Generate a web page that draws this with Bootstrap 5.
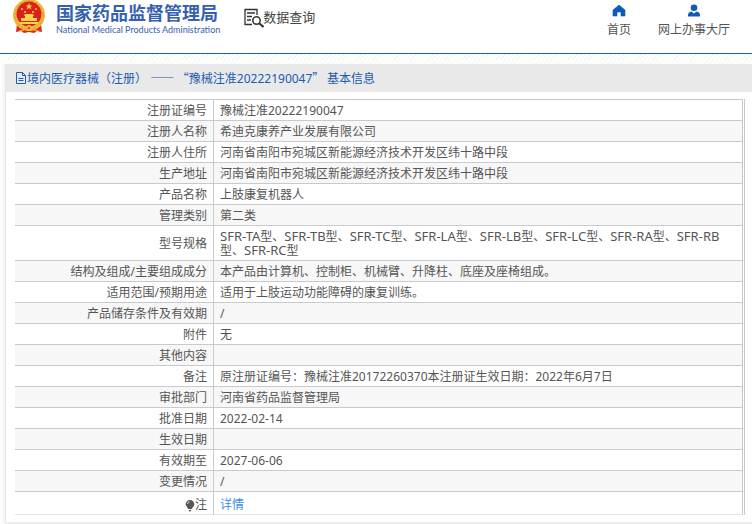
<!DOCTYPE html>
<html lang="zh-CN">
<head>
<meta charset="utf-8">
<meta name="viewport" content="width=device-width, initial-scale=1">
<title>国家药品监督管理局 数据查询</title>
<link href="https://cdn.jsdelivr.net/npm/bootstrap@5.3.0/dist/css/bootstrap.min.css" rel="stylesheet">
<style>
body{font-family:"Noto Sans","Noto Sans CJK SC",sans-serif;font-size:12px;line-height:14px;color:#555;background:#fff}
a{text-decoration:none}
.site-header{height:54px;border-bottom:1px solid #1b6289;padding:0 22px 0 12px}
.hatch{height:10px;background:repeating-linear-gradient(135deg,#f2f6f6 0 1px,#fff 1px 3px);border-bottom:4px solid #fdfdfd}
.brand{color:#3560b0;gap:10px}
.brand-cn{font:700 18px/24px "Noto Sans CJK SC",sans-serif}
.brand-en{font:400 9px/12px Lato,sans-serif}
.query-link{color:#444;font-size:13px;line-height:18px;margin-left:24px;padding-top:8px}
.query-link svg{margin-right:-1px}
.nav-item-link{color:#555;line-height:16px;gap:5px;padding-top:4px}
.nav-item-link svg{color:#0d5bb8}
.top-nav{gap:27px}
.panel{margin-left:5px;border-left:1px solid #e6e6e6;border-bottom:2px solid #ededed;box-shadow:-3px 0 3px #f6f6f6}
.panel-title{font-size:12px;line-height:20px;height:28px;background:#e9e9e9;color:#1a5cb0;padding-left:9px;margin:0 0 7px;font-weight:400}
.cjk{font-family:"Noto Sans CJK SC",sans-serif}
.table-wrap{margin:0 7px 0 9px;border-right:1px solid #c8cacd;padding-right:1px;margin-bottom:7px}
.info{width:100%;border-right:1px solid #c8cacd;border-collapse:separate;border-spacing:0}
.info th,.info td{border-top:1px solid #c8cacd;padding:4px 6px 2px;font-weight:400;vertical-align:middle}
.info th{width:199px;text-align:right;border-right:1px solid #c8cacd}
.info tr:nth-child(even){background:#f7f7f7}
.info tr:last-child>*{padding-top:6px;padding-bottom:2px;border-bottom:1px solid #e4e4e4}
.info tr>td:empty{height:21px}
.info a{color:#3a8ee6}
.models span{font-size:13px;line-height:12px}
</style>
</head>
<body>
<header class="site-header d-flex justify-content-between align-items-start">
  <div class="d-flex align-items-start">
    <a href="#" class="brand d-flex align-items-start">
      <svg width="34" height="34" viewBox="0 0 34 34" aria-hidden="true">
        <path d="M5 24L4 32l5-1 3 2 5-1 5 1 3-2 5 1-1-8z" fill="#d92a20"/>
        <circle cx="17" cy="15" r="16" fill="#efb83e"/>
        <circle cx="17" cy="15" r="14" fill="none" stroke="#d99424" stroke-width="1" stroke-dasharray="2 2"/>
        <circle cx="17" cy="14" r="12.500" fill="#dc2118"/>
        <path d="M17 3l1 2.500h2.500l-2 1.500.8 2.500L17 8l-2.300 1.500.8-2.500-2-1.500H16z" fill="#fbd34c"/>
        <g fill="#fbd34c"><circle cx="10" cy="9" r="1"/><circle cx="24" cy="9" r="1"/><circle cx="13" cy="12" r="1"/><circle cx="21" cy="12" r="1"/><path d="M13 14h8l1 2h-1v2h4v3H9v-3h4v-2h-1zM7 22h20l-2 2H9z"/></g>
        <circle cx="17" cy="28" r="3" fill="#efb83e"/><circle cx="17" cy="28" r="1" fill="#d92a20"/>
        <path d="M8 26q4 0 5 3M26 26q-4 0-5 3M7 31l5-1M27 31l-5-1" fill="none" stroke="#efb83e"/>
      </svg>
      <span class="d-flex flex-column">
        <span class="brand-cn">国家药品监督管理局</span>
        <span class="brand-en">National Medical Products Administration</span>
      </span>
    </a>
    <a href="#" class="query-link d-flex">
      <svg width="20" height="20" viewBox="0 0 20 20" fill="none" stroke="#333" aria-hidden="true">
        <path d="M13 7V1.500H1V16.500H8M3 5h8M3 8.500h5M3 12h4" stroke-width="1.300"/>
        <circle cx="12.500" cy="12.500" r="3.700" stroke-width="1.500"/><path d="M15.500 15.500l4 3.500" stroke-width="2.200"/>
      </svg><span>数据查询</span>
    </a>
  </div>
  <nav class="top-nav d-flex">
    <a href="#" class="nav-item-link d-flex flex-column align-items-center">
      <svg width="14" height="13" viewBox="0 0 14 13" fill="currentColor" aria-hidden="true"><path d="M7 1l6 5v6H9V8H5v4H1V6z" stroke="currentColor" stroke-linejoin="round" stroke-width=".6"/></svg>
      <span>首页</span>
    </a>
    <a href="#" class="nav-item-link d-flex flex-column align-items-center">
      <svg width="14" height="13" viewBox="0 0 14 13" fill="currentColor" aria-hidden="true"><circle cx="7" cy="3.700" r="3.300"/><path d="M1 12.500V11q0-3 3.500-3.500L7 9.500l2.500-2Q13 8 13 11v1.500z"/></svg>
      <span>网上办事大厅</span>
    </a>
  </nav>
</header>
<div class="hatch"></div>
<main class="panel">
  <h1 class="panel-title d-flex align-items-center">
    <svg width="12" height="12" viewBox="0 0 12 12" fill="none" stroke="currentColor" aria-hidden="true"><path d="M1.500.5h6l3 3v8h-9zM7.500.5v3h3M3.500 6.500h5M3.500 8.500h5"/></svg>
    <span>境内医疗器械（注册） <span class="cjk">—— “</span>豫械注准20222190047<span class="cjk">” </span>基本信息</span>
  </h1>
  <div class="table-wrap">
    <table class="info">
      <tbody>
        <tr><th scope="row">注册证编号</th><td>豫械注准20222190047</td></tr>
        <tr><th scope="row">注册人名称</th><td>希迪克康养产业发展有限公司</td></tr>
        <tr><th scope="row">注册人住所</th><td>河南省南阳市宛城区新能源经济技术开发区纬十路中段</td></tr>
        <tr><th scope="row">生产地址</th><td>河南省南阳市宛城区新能源经济技术开发区纬十路中段</td></tr>
        <tr><th scope="row">产品名称</th><td>上肢康复机器人</td></tr>
        <tr><th scope="row">管理类别</th><td>第二类</td></tr>
        <tr><th scope="row">型号规格</th><td class="models"><span>SFR-TA</span>型、<span>SFR-TB</span>型、<span>SFR-TC</span>型、<span>SFR-LA</span>型、<span>SFR-LB</span>型、<span>SFR-LC</span>型、<span>SFR-RA</span>型、<span>SFR-RB</span>型、<span>SFR-RC</span>型</td></tr>
        <tr><th scope="row">结构及组成/主要组成成分</th><td>本产品由计算机、控制柜、机械臂、升降柱、底座及座椅组成。</td></tr>
        <tr><th scope="row">适用范围/预期用途</th><td>适用于上肢运动功能障碍的康复训练。</td></tr>
        <tr><th scope="row">产品储存条件及有效期</th><td>/</td></tr>
        <tr><th scope="row">附件</th><td>无</td></tr>
        <tr><th scope="row">其他内容</th><td></td></tr>
        <tr><th scope="row">备注</th><td>原注册证编号：豫械注准20172260370本注册证生效日期：2022年6月7日</td></tr>
        <tr><th scope="row">审批部门</th><td>河南省药品监督管理局</td></tr>
        <tr><th scope="row">批准日期</th><td>2022-02-14</td></tr>
        <tr><th scope="row">生效日期</th><td></td></tr>
        <tr><th scope="row">有效期至</th><td>2027-06-06</td></tr>
        <tr><th scope="row">变更情况</th><td>/</td></tr>
        <tr><th scope="row"><svg width="10" height="12" viewBox="0 0 10 12" aria-hidden="true"><path d="M5 0a4.300 4.300 0 0 1 4.300 4.300C9.300 6.500 7 7.500 7 9H3C3 7.500.7 6.500.7 4.300A4.300 4.300 0 0 1 5 0zM3.500 10h3l-1 1.500h-1z" fill="#555"/><path d="M2.500 4Q2.500 2 4.500 1.700" stroke="#fff" stroke-width=".8" fill="none"/></svg>注</th><td><a href="#">详情</a></td></tr>
      </tbody>
    </table>
  </div>
</main>
<script src="https://cdn.jsdelivr.net/npm/bootstrap@5.3.0/dist/js/bootstrap.bundle.min.js"></script>
</body>
</html>
